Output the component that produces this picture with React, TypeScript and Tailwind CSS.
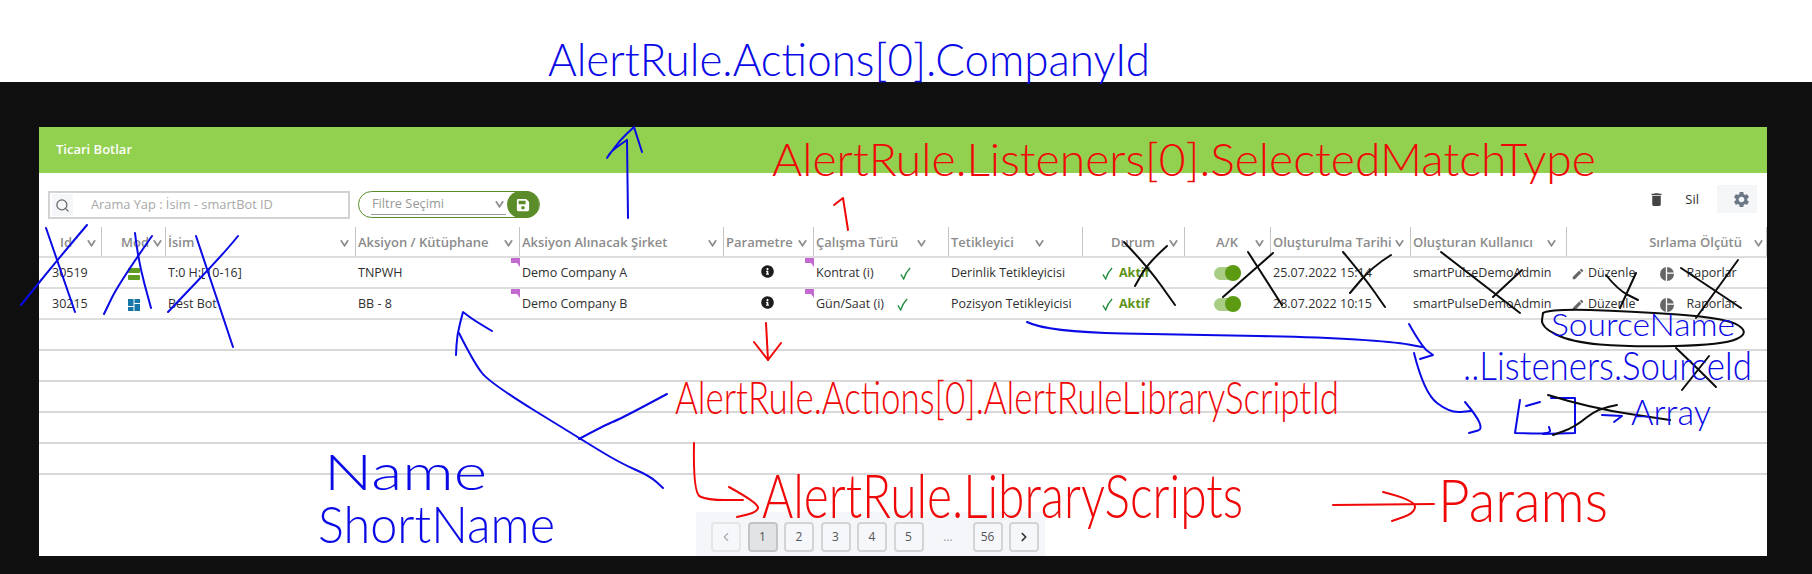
import { ChevronLeft, ChevronRight, Search } from 'lucide-react';
import { FaInfoCircle, FaSave } from 'react-icons/fa';
import { MdDelete, MdEdit, MdSettings } from 'react-icons/md';

const gridCols =
  'grid grid-cols-[63px_64px_190px_164px_204px_90px_135px_134px_102px_86px_140px_156px_200px]';

const BLUE = '#0a0ae6';
const RED = '#f00808';
const BLACK = '#0c0c0c';

function Caret() {
  return (
    <svg viewBox="0 0 10 8" className="w-[9px] h-[8px] shrink-0 text-[#8f8f8f]">
      <path d="M1 1l4 6 4-6" fill="none" stroke="currentColor" strokeWidth="2" />
    </svg>
  );
}

function HeaderCell({
  label,
  align = 'justify-between',
  pad = 'pl-[2px] pr-[6px]',
}: {
  label?: string;
  align?: string;
  pad?: string;
}) {
  return (
    <div className={`flex items-center border-r border-[#c4c4c4] pt-[2px] ${align} ${pad}`}>
      <span className="text-[13px] font-semibold text-[#8b8b8b] whitespace-nowrap">{label}</span>
      <Caret />
    </div>
  );
}

function Corner() {
  return (
    <svg viewBox="0 0 9 9" className="absolute -top-[2px] right-0 w-[9px] h-[9px] text-[#c36ad1]">
      <path d="M0 0h9v9L6 5H0z" fill="currentColor" />
    </svg>
  );
}

function GreenCheck() {
  return (
    <svg viewBox="0 0 12 14" className="w-[11px] h-[13px] text-[#1f8a3c]">
      <path d="M1 8l3 5C5.500 8 8 4 11 1" fill="none" stroke="currentColor" strokeWidth="1.400" />
    </svg>
  );
}

function ModeIcon({ kind }: { kind: 'bars' | 'tiles' }) {
  if (kind === 'bars') {
    return (
      <svg viewBox="0 0 12 12" className="w-3 h-3 text-[#5f9e23]">
        <rect y="0" width="12" height="5" rx="1" fill="currentColor" />
        <rect y="7" width="12" height="5" rx="1" fill="currentColor" />
      </svg>
    );
  }
  return (
    <svg viewBox="0 0 12 12" className="w-3 h-3 text-[#1676a8]">
      <rect x="0" y="0" width="5.500" height="7" fill="currentColor" />
      <rect x="6.500" y="0" width="5.500" height="4" fill="currentColor" />
      <rect x="0" y="8" width="5.500" height="4" fill="currentColor" />
      <rect x="6.500" y="5" width="5.500" height="7" fill="currentColor" />
    </svg>
  );
}

function ReportIcon() {
  return (
    <svg viewBox="0 0 14 14" className="w-[14px] h-[14px] text-[#666]">
      <circle cx="7" cy="7" r="7" fill="currentColor" />
      <path d="M6.500 0v14M7 6.200h7" stroke="#fff" strokeWidth="1.300" />
    </svg>
  );
}

function Toggle() {
  return (
    <div className="relative w-[27px] h-[13px] rounded-full bg-[#a9cd85]">
      <div className="absolute -top-[2px] right-0 w-4 h-4 rounded-full bg-[#5c9a12]" />
    </div>
  );
}

const rows = [
  {
    id: '30519',
    mode: 'bars' as const,
    name: 'T:0 H:[10-16]',
    lib: 'TNPWH',
    company: 'Demo Company A',
    type: 'Kontrat (i)',
    checkPad: 'pl-[26px]',
    trigger: 'Derinlik Tetikleyicisi',
    date: '25.07.2022 15:14',
  },
  {
    id: '30215',
    mode: 'tiles' as const,
    name: 'Best Bot',
    lib: 'BB - 8',
    company: 'Demo Company B',
    type: 'Gün/Saat (i)',
    checkPad: 'pl-[13px]',
    trigger: 'Pozisyon Tetikleyicisi',
    date: '28.07.2022 10:15',
  },
];

function Row({ row }: { row: (typeof rows)[number] }) {
  return (
    <div className={`${gridCols} h-[31px] pt-[2px] border-b-2 border-[#dedede] items-center text-[12.500px] text-[#2f2f2f]`}>
      <div className="pl-[13px]">{row.id}</div>
      <div className="flex justify-center">
        <ModeIcon kind={row.mode} />
      </div>
      <div className="pl-[2px]">{row.name}</div>
      <div className="relative h-full flex items-center pl-[2px]">
        {row.lib}
        <Corner />
      </div>
      <div className="pl-[2px]">{row.company}</div>
      <div className="relative h-full flex items-center justify-center pb-[4px] pr-[3px]">
        <FaInfoCircle className="w-[13px] h-[13px] text-[#1d1d1d]" />
        <Corner />
      </div>
      <div className="flex items-center pl-[2px]">
        <span>{row.type}</span>
        <span className={row.checkPad}>
          <GreenCheck />
        </span>
      </div>
      <div className="pl-[2px]">{row.trigger}</div>
      <div className="flex items-center gap-[6px] pl-[19px]">
        <GreenCheck />
        <span className="font-bold text-[#5d9216]">Aktif</span>
      </div>
      <div className="pl-[29px]">
        <Toggle />
      </div>
      <div className="pl-[2px]">{row.date}</div>
      <div className="pl-[2px]">smartPulseDemoAdmin</div>
      <div className="flex items-center pl-[4px]">
        <MdEdit className="w-[14px] h-[14px] text-[#666]" />
        <span className="pl-[3px]">Düzenle</span>
        <span className="pl-[25px]">
          <ReportIcon />
        </span>
        <span className="pl-[12px]">Raporlar</span>
      </div>
    </div>
  );
}

function PageButton({ label, active }: { label: string; active?: boolean }) {
  return (
    <div
      className={`w-[30px] h-[30px] flex items-center justify-center rounded border-2 text-xs text-[#555] ${
        active ? 'bg-[#e2e3e4] border-[#c4c4c4]' : 'bg-[#f6f7fb] border-[#d4d4d4]'
      }`}
    >
      {label}
    </div>
  );
}

// turns hand-picked points into one soft pen stroke, a doubled point gives a sharp corner
function stroke(points: number[][]) {
  let d = `M${points[0][0]} ${points[0][1]}`;
  for (let i = 1; i < points.length - 1; i++) {
    const mx = (points[i][0] + points[i + 1][0]) / 2;
    const my = (points[i][1] + points[i + 1][1]) / 2;
    d += `Q${points[i][0]} ${points[i][1]} ${mx} ${my}`;
  }
  const last = points[points.length - 1];
  return `${d}L${last[0]} ${last[1]}`;
}

const inkStrokes: { color: string; pts: number[][] }[] = [
  // blue crosses on the first columns
  { color: BLUE, pts: [[46, 228], [75, 312]] },
  { color: BLUE, pts: [[87, 225], [59, 258], [21, 305]] },
  { color: BLUE, pts: [[135, 233], [138, 260], [151, 308]] },
  { color: BLUE, pts: [[152, 236], [119, 283], [104, 314]] },
  { color: BLUE, pts: [[196, 236], [233, 347]] },
  { color: BLUE, pts: [[238, 236], [227, 250], [168, 312]] },
  // arrow to the company column
  { color: BLUE, pts: [[628, 218], [627, 140]] },
  { color: BLUE, pts: [[627, 140], [612, 150], [607, 158], [607, 158], [620, 140], [634, 127], [634, 127], [642, 152]] },
  // arrow from the library label
  { color: BLUE, pts: [[492, 331], [475, 321], [463, 312], [463, 312], [457, 335], [456, 355]] },
  { color: BLUE, pts: [[459, 333], [474, 363], [490, 383], [579, 438], [620, 463], [650, 476], [663, 488]] },
  { color: BLUE, pts: [[579, 439], [605, 425], [620, 419], [667, 394]] },
  // arrows from the trigger column
  { color: BLUE, pts: [[1027, 322], [1047, 332], [1200, 335], [1317, 337], [1395, 342], [1422, 347]] },
  { color: BLUE, pts: [[1409, 324], [1422, 347], [1433, 355], [1433, 355], [1420, 359]] },
  { color: BLUE, pts: [[1414, 353], [1424, 393], [1450, 413], [1471, 411]] },
  { color: BLUE, pts: [[1465, 402], [1487, 428], [1469, 433]] },
  // the empty array brackets
  { color: BLUE, pts: [[1520, 400], [1515, 433], [1515, 433], [1551, 434], [1549, 427]] },
  { color: BLUE, pts: [[1526, 406], [1540, 402]] },
  { color: BLUE, pts: [[1551, 398], [1575, 398], [1575, 398], [1575, 433], [1575, 433], [1543, 434]] },
  { color: BLUE, pts: [[1602, 415], [1622, 416], [1622, 416], [1614, 422]] },
  // red arrows
  { color: RED, pts: [[848, 230], [843, 198], [843, 198], [834, 205]] },
  { color: RED, pts: [[766, 323], [768, 360]] },
  { color: RED, pts: [[754, 342], [768, 360], [768, 360], [781, 343]] },
  { color: RED, pts: [[694, 443], [693, 493], [707, 500], [743, 500]] },
  { color: RED, pts: [[729, 487], [758, 503], [758, 512], [737, 517]] },
  { color: RED, pts: [[1333, 505], [1434, 504]] },
  { color: RED, pts: [[1383, 492], [1415, 500], [1415, 513], [1392, 521]] },
  // black crosses on the right columns
  { color: BLACK, pts: [[1124, 242], [1148, 267], [1175, 305]] },
  { color: BLACK, pts: [[1167, 246], [1148, 263], [1135, 286]] },
  { color: BLACK, pts: [[1248, 252], [1282, 305]] },
  { color: BLACK, pts: [[1273, 253], [1223, 297]] },
  { color: BLACK, pts: [[1343, 252], [1364, 277], [1385, 307]] },
  { color: BLACK, pts: [[1391, 255], [1372, 267], [1350, 293]] },
  { color: BLACK, pts: [[1441, 252], [1520, 313]] },
  { color: BLACK, pts: [[1522, 270], [1493, 297]] },
  { color: BLACK, pts: [[1606, 275], [1618, 290], [1638, 300]] },
  { color: BLACK, pts: [[1636, 273], [1620, 308]] },
  { color: BLACK, pts: [[1681, 268], [1741, 308]] },
  { color: BLACK, pts: [[1738, 260], [1696, 318]] },
  { color: BLACK, pts: [[1543, 313], [1551, 309], [1629, 311], [1727, 318], [1750, 333], [1723, 345], [1629, 347], [1571, 342], [1541, 327], [1543, 313]] },
  { color: BLACK, pts: [[1676, 348], [1696, 367], [1716, 387]] },
  { color: BLACK, pts: [[1709, 356], [1682, 390]] },
  { color: BLACK, pts: [[1548, 395], [1590, 408], [1670, 420]] },
  { color: BLACK, pts: [[1617, 405], [1598, 408], [1575, 427], [1553, 435]] },
];

const inkNotes = [
  { text: 'AlertRule.Actions[0].CompanyId', x: 548, y: 76, size: 46, width: 602, color: BLUE },
  { text: 'AlertRule.Listeners[0].SelectedMatchType', x: 772, y: 176, size: 46, width: 824, color: RED },
  { text: 'AlertRule.Actions[0].AlertRuleLibraryScriptId', x: 675, y: 414, size: 46, width: 664, color: RED },
  { text: 'AlertRule.LibraryScripts', x: 762, y: 518, size: 62, width: 481, color: RED },
  { text: 'Params', x: 1438, y: 522, size: 60, width: 170, color: RED },
  { text: 'Name', x: 324, y: 490, size: 50, width: 163, color: BLUE },
  { text: 'ShortName', x: 318, y: 543, size: 52, width: 237, color: BLUE },
  { text: 'SourceName', x: 1551, y: 336, size: 32, width: 184, color: BLUE },
  { text: '..Listeners.SourceId', x: 1463, y: 380, size: 40, width: 289, color: BLUE },
  { text: 'Array', x: 1631, y: 425, size: 36, width: 80, color: BLUE },
];

function InkLayer() {
  return (
    <svg viewBox="0 0 1812 574" className="absolute inset-0 w-[1812px] h-[574px] pointer-events-none">
      {inkStrokes.map((s, i) => (
        <path
          key={i}
          d={stroke(s.pts)}
          fill="none"
          stroke={s.color}
          strokeWidth="2"
          strokeLinecap="round"
          strokeLinejoin="round"
        />
      ))}
      {inkNotes.map((n) => (
        <text
          key={n.text}
          x={n.x}
          y={n.y}
          fontSize={n.size}
          fill={n.color}
          textLength={n.width}
          lengthAdjust="spacingAndGlyphs"
          className="font-['Lato',sans-serif] font-light"
        >
          {n.text}
        </text>
      ))}
    </svg>
  );
}

export default function App() {
  return (
    <div className="relative w-[1812px] h-[574px] overflow-hidden bg-white pt-[82px] font-['Open_Sans',sans-serif]">
      <div className="h-[492px] bg-[#0f0f0f] pt-[45px] pl-[39px]">
        <div className="w-[1728px] h-[429px] bg-white">
          {/* Green title bar */}
          <div className="h-[46px] bg-[#92d050] flex items-center pl-[17px]">
            <h1 className="text-[13px] font-semibold text-white">Ticari Botlar</h1>
          </div>

          {/* Toolbar */}
          <div className="h-[54px] flex pl-[9px] pt-[18px]">
            <div className="w-[302px] h-[28px] border-2 border-[#d2d2d2] flex items-center pl-[2px]">
              <div className="w-[21px] h-[22px] bg-[#f4f6fa] flex items-center justify-center">
                <Search className="w-[15px] h-[15px] text-[#666]" />
              </div>
              <span className="pl-[18px] text-[12.800px] text-[#a8a8a8]">Arama Yap : İsim - smartBot ID</span>
            </div>
            <div className="ml-2 w-[182px] h-[27px] border border-[#5b8c2a] rounded-full flex items-center pl-[12px]">
              <div className="w-[135px] h-[20px] border-b border-[#9a9a9a] flex items-center justify-between pl-[1px] pr-[2px]">
                <span className="text-[12.800px] text-[#999]">Filtre Seçimi</span>
                <Caret />
              </div>
              <div className="ml-auto w-[32px] h-[27px] rounded-full bg-[#5b8c2a] flex items-center justify-center">
                <FaSave className="w-[14px] h-[14px] text-white" />
              </div>
            </div>
            <div className="ml-auto flex items-start -mt-[6px] pr-[10px]">
              <MdDelete className="mt-[6px] w-[17px] h-[17px] text-[#444]" />
              <span className="mt-[5px] pl-[20px] text-[13px] text-[#333]">Sil</span>
              <div className="ml-[18px] w-[40px] h-[28px] bg-[#f4f6f8] flex items-center justify-end pr-[6px]">
                <MdSettings className="w-[19px] h-[19px] text-[#6b7785]" />
              </div>
            </div>
          </div>

          {/* Table header */}
          <div className={`${gridCols} h-[31px] border-b-2 border-[#dedede]`}>
            <HeaderCell label="Id" align="justify-end gap-[15px]" pad="pr-[5px]" />
            <HeaderCell label="Mod" align="justify-end gap-[4px]" pad="pr-[3px]" />
            <HeaderCell label="İsim" />
            <HeaderCell label="Aksiyon / Kütüphane" />
            <HeaderCell label="Aksiyon Alınacak Şirket" />
            <HeaderCell label="Parametre" />
            <HeaderCell label="Çalışma Türü" pad="pl-[2px] pr-[22px]" />
            <HeaderCell label="Tetikleyici" pad="pl-[2px] pr-[38px]" />
            <HeaderCell label="Durum" align="justify-end gap-[14px]" pad="pr-[6px]" />
            <HeaderCell label="A/K" align="justify-end gap-[17px]" pad="pr-[6px]" />
            <HeaderCell label="Oluşturulma Tarihi" />
            <HeaderCell label="Oluşturan Kullanıcı" pad="pl-[2px] pr-[10px]" />
            <HeaderCell label="Sırlama Ölçütü" align="justify-end gap-[12px]" pad="pr-[3px]" />
          </div>

          {/* Rows */}
          {rows.map((row) => (
            <Row key={row.id} row={row} />
          ))}
          {[0, 1, 2, 3, 4].map((n) => (
            <div key={n} className="h-[31px] border-b-2 border-[#d8d8d8]" />
          ))}

          {/* Pagination */}
          <div className="mt-[37px] ml-[657px] w-[349px] h-[44px] bg-[#f4f6fa] flex items-start gap-[6.500px] pl-[15px] pt-[10px]">
            <div className="w-[30px] h-[30px] flex items-center justify-center rounded border-2 border-[#e6e6e6] bg-[#f6f7fb]">
              <ChevronLeft className="w-[14px] h-[14px] text-[#aaa]" />
            </div>
            <PageButton label="1" active />
            <PageButton label="2" />
            <PageButton label="3" />
            <PageButton label="4" />
            <PageButton label="5" />
            <span className="w-[36px] h-[30px] flex items-center justify-center text-xs text-[#999]">...</span>
            <PageButton label="56" />
            <div className="w-[30px] h-[30px] flex items-center justify-center rounded border-2 border-[#d4d4d4] bg-[#f6f7fb]">
              <ChevronRight className="w-[14px] h-[14px] text-[#333]" strokeWidth={3} />
            </div>
          </div>
        </div>
      </div>

      <InkLayer />
    </div>
  );
}
